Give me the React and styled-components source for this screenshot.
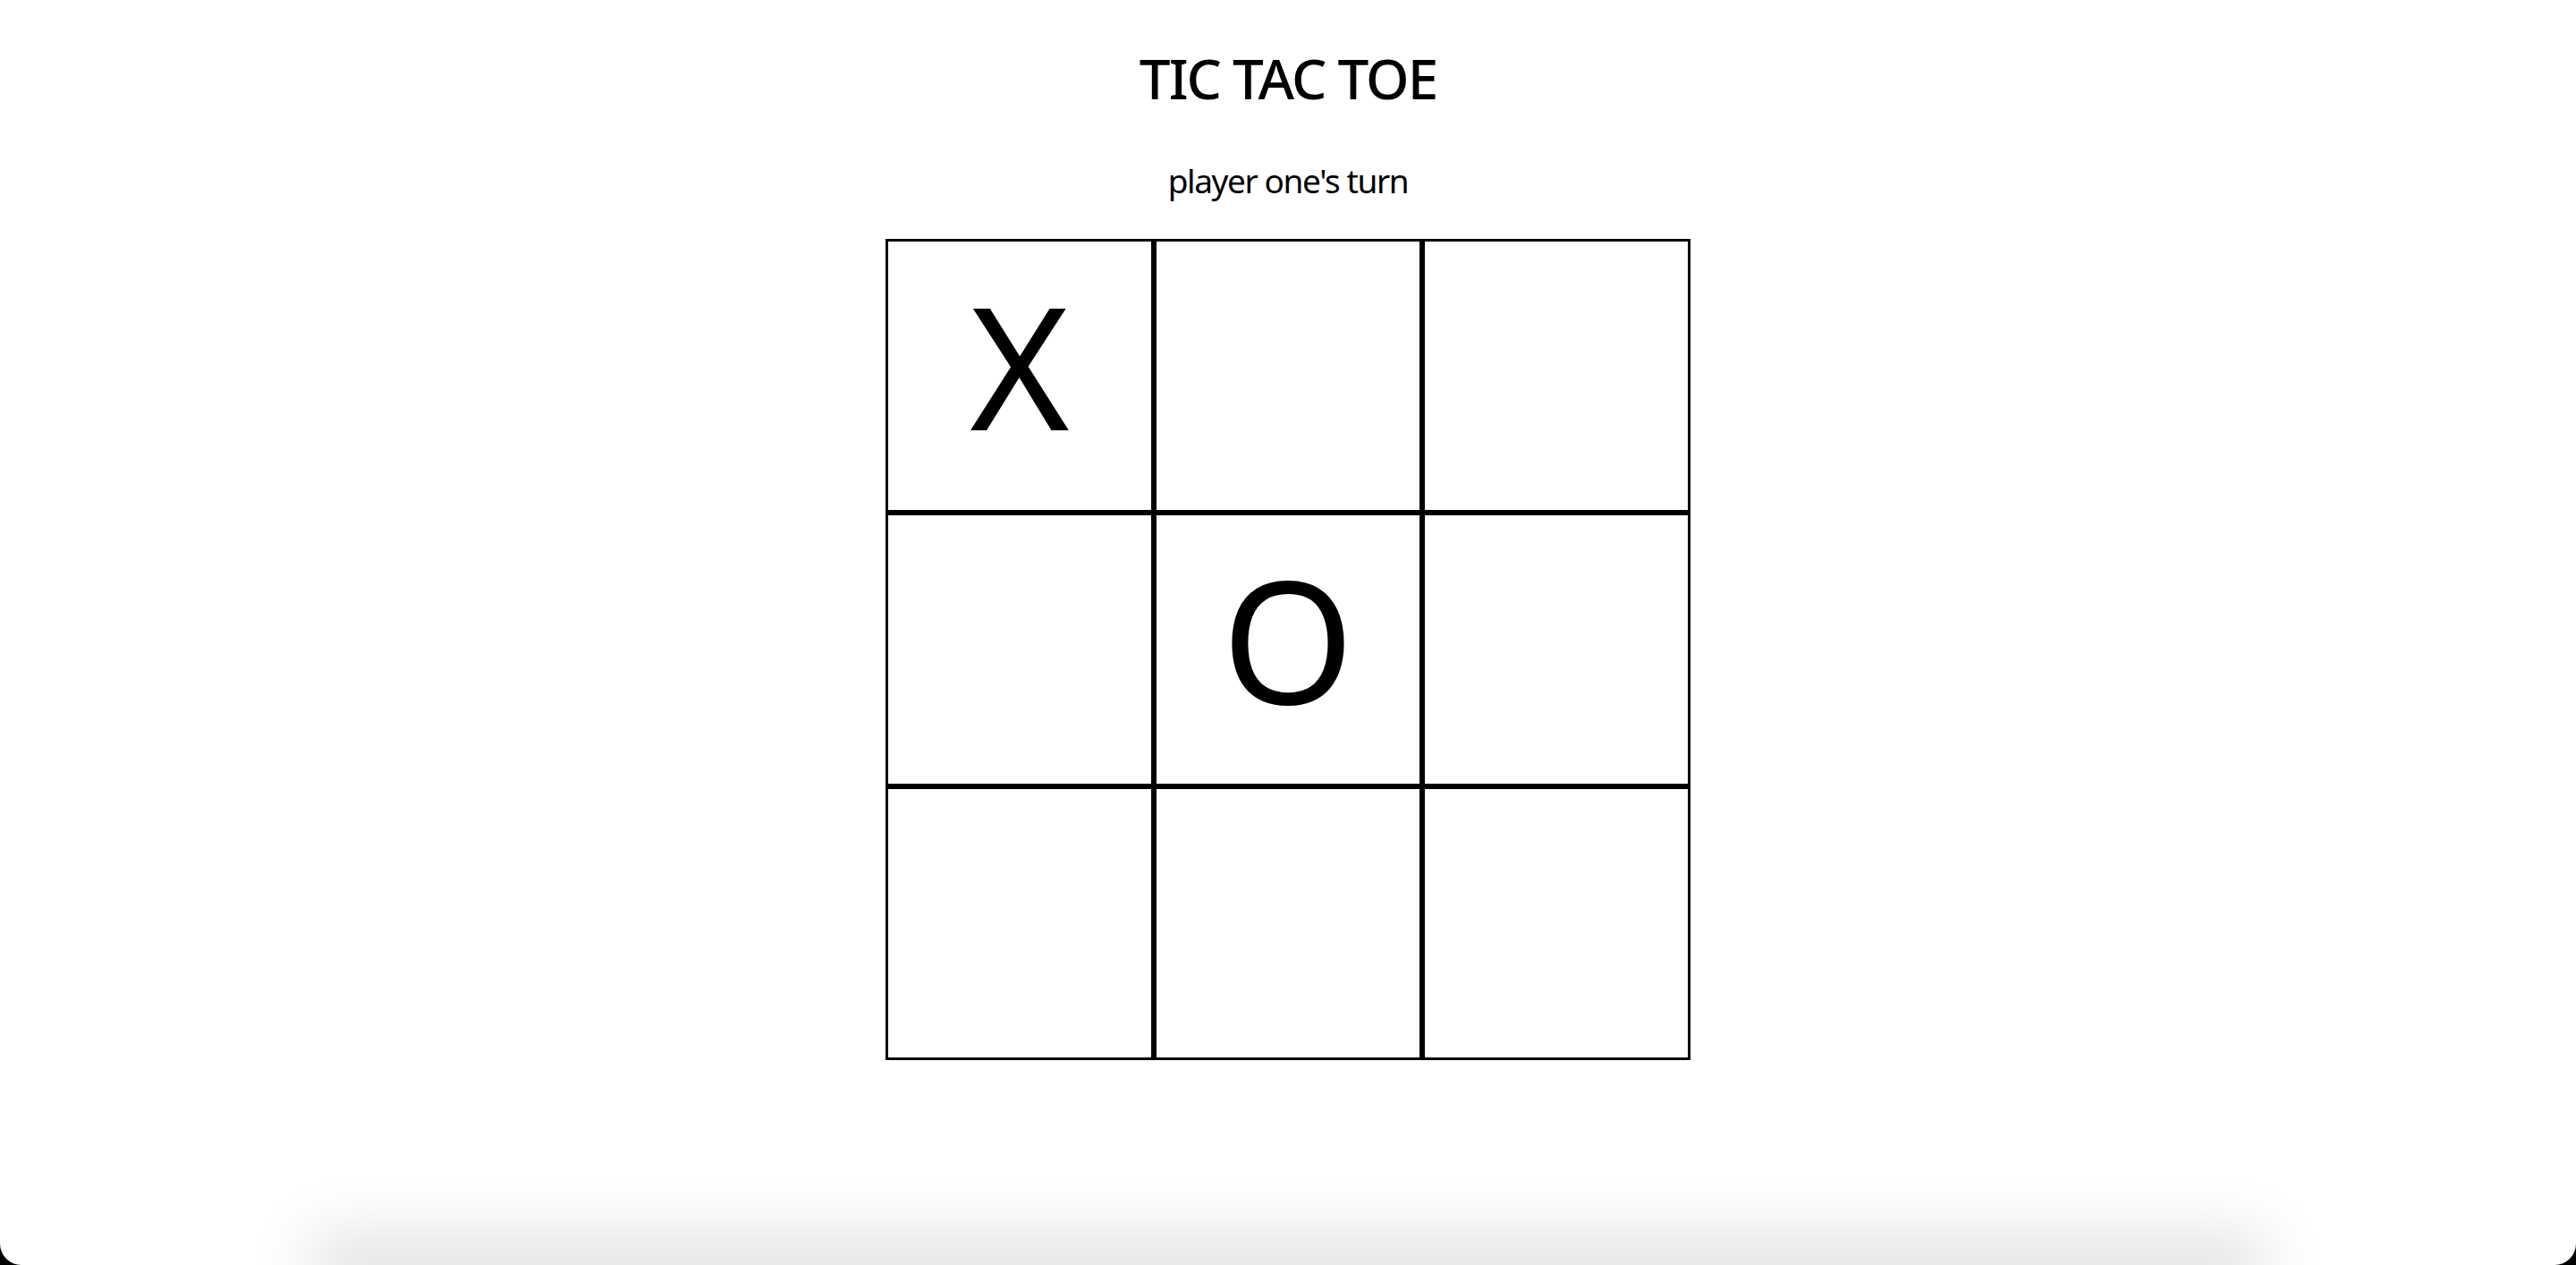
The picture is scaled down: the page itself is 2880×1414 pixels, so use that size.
import { useState } from "react";
import styled, { createGlobalStyle } from "styled-components";

const GlobalStyle = createGlobalStyle`
  html, body {
    margin: 0;
    padding: 0;
    background: #000;
  }
  body {
    font-family: "Noto Sans", "Open Sans", sans-serif;
    color: #000;
  }
`;

const Page = styled.div`
  height: 100vh;
  display: flex;
  flex-direction: column;
  align-items: center;
  background: #fff;
  border-radius: 0 0 24px 24px;
  overflow: hidden;
  padding-top: 44px;
  box-sizing: border-box;
`;

const Title = styled.h1`
  margin: 0;
  font-size: 62px;
  font-weight: 500;
  letter-spacing: -2px;
  line-height: 86px;
`;

const Status = styled.p`
  margin: 45px 0 0;
  font-size: 37px;
  letter-spacing: -1.4px;
  line-height: 54px;
`;

const Board = styled.div`
  margin-top: 38px;
  display: grid;
  grid-template-columns: repeat(3, 300px);
  grid-template-rows: repeat(3, 306px);
`;

const Cell = styled.div`
  box-sizing: border-box;
  border: 3px solid #000;
  display: flex;
  align-items: center;
  justify-content: center;
  padding-bottom: 24px;
  font-size: 190px;
  line-height: 1;
  cursor: ${(p) => (p.$filled ? "default" : "pointer")};
`;

const Shelf = styled.div`
  margin-top: auto;
  width: 2120px;
  height: 0;
  flex-shrink: 0;
  box-shadow: 0 0 70px 32px rgba(0, 0, 0, 0.13);
`;

const App = () => {
  const [squares, setSquares] = useState(["X", "", "", "", "O", "", "", "", ""]);
  const [xNext, setXNext] = useState(true);

  function play(i) {
    if (squares[i]) return;
    const next = squares.slice();
    next[i] = xNext ? "X" : "O";
    setSquares(next);
    setXNext(!xNext);
  }

  return (
    <>
      <GlobalStyle />
      <Page>
        <Title>TIC TAC TOE</Title>
        <Status>{xNext ? "player one's turn" : "player two's turn"}</Status>
        <Board>
          {squares.map((value, i) => (
            <Cell key={i} $filled={!!value} onClick={() => play(i)}>
              {value}
            </Cell>
          ))}
        </Board>
        <Shelf />
      </Page>
    </>
  );
};

export default App;
